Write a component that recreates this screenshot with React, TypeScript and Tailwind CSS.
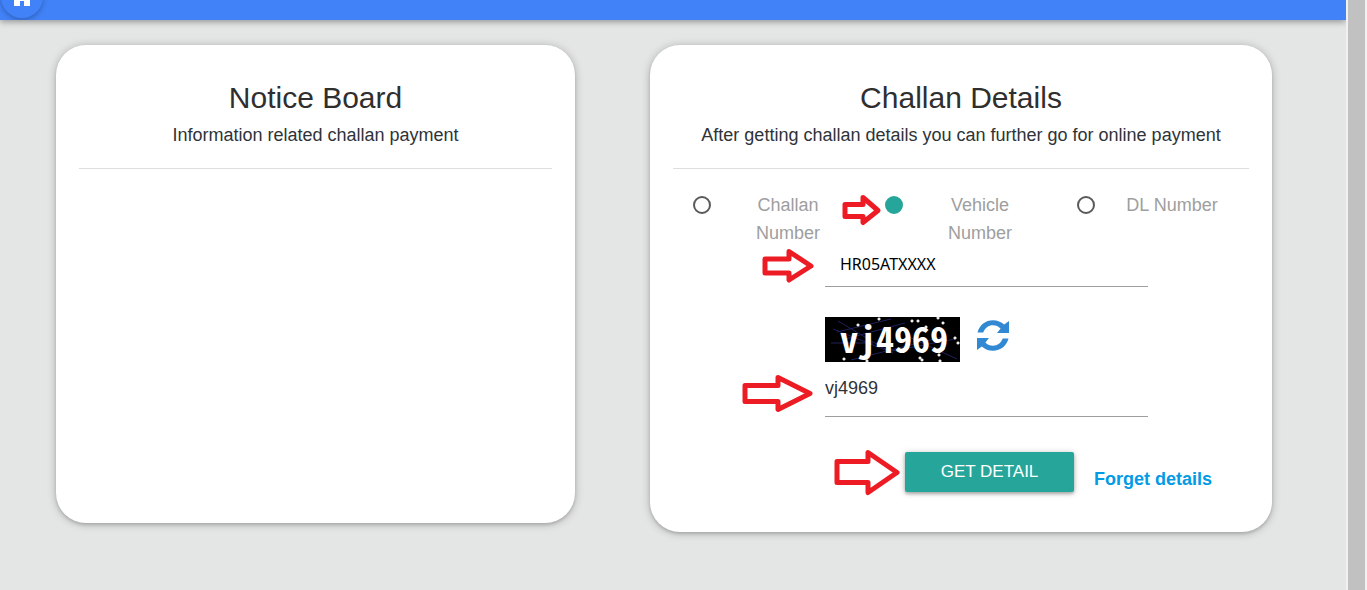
import { ReactNode } from "react";

const radioOptions = [
  { id: "challan", label: "Challan Number" },
  { id: "vehicle", label: "Vehicle Number" },
  { id: "dl", label: "DL Number" },
];

const noise = [
  [33, 8], [54, 2], [87, 4], [93, 4], [113, 1], [118, 6], [101, 10], [130, 21], [133, 26],
  [118, 32], [114, 38], [19, 42], [95, 41], [97, 43], [42, 44], [115, 44],
];

const Card = ({ title, subtitle, className, children }: { title: string; subtitle: string; className: string; children?: ReactNode }) => (
  <section
    className={`rounded-[30px] bg-white px-[23px] pt-8 shadow-[0_2px_3px_rgba(0,0,0,0.12),0_1px_9px_rgba(0,0,0,0.25)] ${className}`}
  >
    <div className="border-b border-[#dedede] pb-[18px] text-center">
      <h2 className="text-[30px] leading-[42px] text-[#2f2f2f]">{title}</h2>
      <p className="pt-0.5 text-[18px] leading-[29px]">{subtitle}</p>
    </div>
    {children}
  </section>
);

const Arrow = ({ d, box, className }: { d: string; box: string; className: string }) => (
  <svg viewBox={box} className={`pointer-events-none absolute ${className}`} aria-hidden="true">
    <path d={d} fill="none" stroke="#ed1c24" strokeWidth="5" strokeLinejoin="round" />
  </svg>
);

const HomeIcon = () => (
  <svg viewBox="0 0 28 28" className="size-7 fill-white" aria-hidden="true">
    <path d="M12 23v-5h4v5h6v-9h4L14 3 2 14h4v9z" />
  </svg>
);

const Captcha = () => (
  <svg viewBox="0 0 135 45" className="h-[45px] w-[135px] overflow-visible bg-black" role="img" aria-label="Captcha">
    <g stroke="#20205e" strokeWidth="1">
      <path d="M6 26h42M13 4l52 31M8 12l60 24M12 15L66 2M26 43l95-24M62 35l68-13M80 18l52 24M20 22l60-16" />
    </g>
    <text x="15" y="36" fill="#fff" className="font-['Noto_Sans_Mono_CJK_SC','Roboto',sans-serif] text-[36px] font-bold">
      vj4969
    </text>
    {noise.map(([x, y]) => (
      <path key={`${x}-${y}`} d={`M${x - 1.5} ${y}h3M${x} ${y - 1.5}v3`} stroke="#fff" strokeWidth="1.4" />
    ))}
  </svg>
);

const RefreshIcon = () => (
  <svg viewBox="0 0 32 32" className="size-8 fill-[#3089d2]" aria-hidden="true">
    <path d="M.5 12.500C2.500 5 8.500.3 16 .3c4.300 0 8.200 1.700 11.200 4.300L32 1v12H20l3.600-4.400C21.500 6.500 19 5.300 16 5.300c-4.700 0-8 2.700-9.700 7.200z" />
    <path d="M31.500 18.500c-2 7.500-8 12.200-15.500 12.200-4.300 0-8.200-1.700-11.200-4.300L0 30V18h12l-3.600 4.400c2.100 2.100 4.600 3.300 7.600 3.300 4.700 0 8-2.700 9.700-7.200z" />
  </svg>
);

export default function App() {
  return (
    <div className="flex min-h-screen bg-[#e4e6e5] font-['Liberation_Sans',Arial,sans-serif] text-[#2f3338]">
      <div className="min-w-0 flex-1">
        <header className="flex h-5 items-end overflow-y-clip bg-[#4182f8] pb-0.5 pl-px shadow-[0_2px_6px_rgba(0,0,0,0.35)]">
          <a
            href="#home"
            aria-label="Home"
            className="flex size-[42px] items-center justify-center rounded-full bg-[#4182f8] shadow-[0_2px_5px_rgba(0,0,0,0.25)]"
          >
            <HomeIcon />
          </a>
        </header>

        <main className="grid grid-cols-[519fr_622fr] items-start gap-x-[75px] pt-[25px] pr-[74px] pb-14 pl-14">
          <Card title="Notice Board" subtitle="Information related challan payment" className="min-h-[478px]" />

          <Card title="Challan Details" subtitle="After getting challan details you can further go for online payment" className="pb-[39px]">
            <form onSubmit={(e) => e.preventDefault()}>
              <fieldset className="grid grid-cols-3 pt-[22px]">
                {radioOptions.map((option) => (
                  <div key={option.id} className="relative flex items-start pl-5">
                    <input
                      type="radio"
                      id={option.id}
                      name="searchBy"
                      defaultChecked={option.id === "vehicle"}
                      className="mt-[5px] size-[18px] shrink-0 appearance-none rounded-full border-2 border-[#5a5a5a] checked:border-[#26a69a] checked:bg-[#26a69a]"
                    />
                    <label htmlFor={option.id} className="ml-[29px] w-24 text-center text-[18px] leading-7 text-[#9e9e9e]">
                      {option.label}
                    </label>
                    {option.id === "vehicle" && (
                      <Arrow box="0 0 42 34" d="M4 11.500h18v-7l15 13-15 12v-6H4z" className="top-0.5 -left-6 h-[34px] w-[42px]" />
                    )}
                  </div>
                ))}
              </fieldset>

              <div className="mr-[101px] ml-[152px]">
                <div className="relative">
                  <input
                    type="text"
                    aria-label="Vehicle number"
                    defaultValue="HR05ATXXXX"
                    className="h-10 w-full border-b border-[#9e9e9e] bg-transparent pb-1.5 pl-[15px] font-['Noto_Sans',sans-serif] text-[16px] text-black outline-none"
                  />
                  <Arrow box="0 0 56 38" d="M5 12h24v-7.500l22 14.500-22 14v-7H5z" className="top-0 -left-[65px] h-[38px] w-14" />
                </div>

                <div className="mt-[30px] flex gap-[17px]">
                  <Captcha />
                  <button type="button" aria-label="Refresh captcha" className="mt-[3px] h-8">
                    <RefreshIcon />
                  </button>
                </div>

                <div className="relative">
                  <input
                    type="text"
                    aria-label="Enter captcha"
                    defaultValue="vj4969"
                    className="h-[55px] w-full border-b border-[#9e9e9e] bg-transparent pb-0.5 text-[18px] outline-none"
                  />
                  <Arrow box="0 0 76 42" d="M5 14.500h33v-8l32 16-32 16v-8H5z" className="top-[9px] -left-[85px] h-[42px] w-[76px]" />
                </div>
              </div>

              <div className="mt-[35px] ml-[232px] flex">
                <div className="relative">
                  <button
                    type="submit"
                    className="h-10 w-[169px] rounded-xs bg-[#26a69a] text-[17px] text-white shadow-[0_2px_3px_rgba(0,0,0,0.2),0_1px_6px_rgba(0,0,0,0.25)]"
                  >
                    GET DETAIL
                  </button>
                  <Arrow box="0 0 72 50" d="M5 14.500h31v-9l29 20-29 20v-10H5z" className="-top-[5px] -left-[73px] h-[50px] w-[72px]" />
                </div>
                <a href="#forget" className="mt-[13px] ml-5 text-[18px] leading-7 font-bold whitespace-nowrap text-[#039be5]">
                  Forget details
                </a>
              </div>
            </form>
          </Card>
        </main>
      </div>

      <div className="w-[21px] border-r-2 border-l-2 border-[#f1f1f1] bg-[#c1c1c1]" />
    </div>
  );
}
